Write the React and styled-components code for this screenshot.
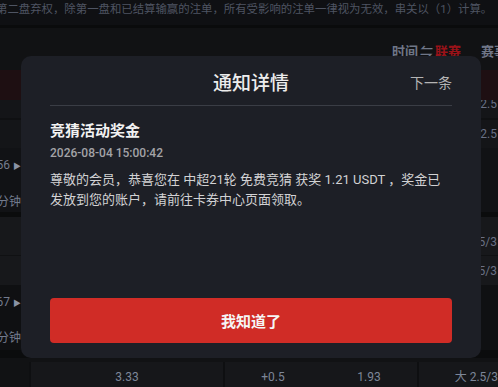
import React from 'react';
import styled, {createGlobalStyle} from 'styled-components';

const GlobalStyle = createGlobalStyle`
    html, body {
        margin: 0;
        padding: 0;
        background: #111214;
        overflow: hidden;
    }
    body {
        font-family: Roboto, "Noto Sans CJK SC", sans-serif;
    }
`;

const Page = styled.div`
    position: relative;
    width: 498px;
    height: 387px;
    overflow: hidden;
    background: #111214;
`;

const Notice = styled.div`
    height: 25px;
    background: #0f1013;
    color: #4e5462;
    font-size: 11.4px;
    line-height: 19px;
    white-space: nowrap;
    overflow: hidden;
    span {
        margin-left: -4px;
    }
`;

const Band = styled.div`
    height: ${p => p.h}px;
    background: ${p => p.bg || '#0a0b0c'};
`;

const Header = styled.div`
    height: 42px;
    display: flex;
    align-items: center;
    justify-content: flex-end;
    gap: 20px;
    padding-top: 2px;
    box-sizing: border-box;
    background: #111214;
    font-size: 13px;
    font-weight: 700;
    color: #6f7687;
    white-space: nowrap;
    overflow: hidden;
`;

const Sort = styled.div`
    display: flex;
    align-items: center;
    gap: 2px;
`;

const Hot = styled.span`
    color: #9a1219;
`;

const Filter = styled.div`
    margin-right: -35px;
`;

const LeagueRow = styled.div`
    height: 30px;
    background: #1e0f12;
`;

const Row = styled.div`
    height: ${p => p.h}px;
    display: flex;
    justify-content: space-between;
    background: ${p => p.bg || '#131417'};
    font-size: 12px;
    color: #687085;
    overflow: hidden;
`;

const Side = styled.div`
    width: 21px;
    display: flex;
    flex-direction: column;
    align-items: flex-end;
    gap: ${p => p.gap || 0}px;
    padding-top: ${p => p.pt || 0}px;
    line-height: 18px;
    white-space: nowrap;
    color: #737b8e;
`;

const Odds = styled.div`
    display: flex;
    align-items: center;
    line-height: ${p => p.lh || 18}px;
    padding-right: 1px;
    white-space: nowrap;
    margin-top: ${p => p.mt || 0}px;
    align-self: ${p => p.top ? 'flex-start' : 'center'};
`;

const Arrow = styled.span`
    font-size: 8px;
    margin-left: 3px;
    color: #8b93a5;
`;

const Bottom = styled.div`
    height: 25px;
    display: flex;
    gap: 2px;
    background: #0e0f11;
    font-size: 12px;
    color: #7d8698;
`;

const Cell = styled.div`
    width: ${p => p.w}px;
    flex: ${p => p.w ? 'none' : 1};
    background: ${p => p.blank ? '#111214' : '#16171a'};
    display: flex;
    align-items: flex-end;
    justify-content: ${p => p.end ? 'flex-end' : 'space-around'};
    padding-bottom: 3px;
    box-sizing: border-box;
    white-space: nowrap;
`;

const Modal = styled.div`
    position: absolute;
    left: 21px;
    top: 56px;
    width: 460px;
    height: 302px;
    box-sizing: border-box;
    background: #1d1f26;
    border-radius: 10px;
    padding: 0 29px 15px;
    display: flex;
    flex-direction: column;
`;

const ModalHead = styled.div`
    height: 49px;
    display: flex;
    align-items: center;
    justify-content: center;
    position: relative;
    border-bottom: 1px solid #3a3d45;
`;

const ModalTitle = styled.div`
    font-size: 19px;
    font-weight: 500;
    color: #ececec;
    padding-top: 1px;
`;

const Next = styled.div`
    position: absolute;
    right: 0;
    top: 16px;
    font-size: 14px;
    color: #b4b4b4;
`;

const MsgTitle = styled.div`
    margin-top: 14px;
    font-size: 15px;
    line-height: 22px;
    font-weight: 700;
    color: #f2f2f2;
`;

const MsgTime = styled.div`
    margin-top: 3px;
    font-size: 12px;
    line-height: 17px;
    font-weight: 500;
    color: #a3a3a6;
`;

const MsgBody = styled.div`
    margin-top: 8px;
    font-size: 13px;
    line-height: 20px;
    color: #d2d2d4;
`;

const OkButton = styled.button`
    margin-top: auto;
    height: 45px;
    width: 100%;
    border: none;
    border-radius: 4px;
    background: #d02c26;
    color: #f5f5f5;
    font-family: inherit;
    font-size: 15px;
    font-weight: 700;
    cursor: pointer;
`;

export default () => {
    return (
        <Page>
            <GlobalStyle/>
            <Notice>
                <span>第二盘弃权，除第一盘和已结算输赢的注单，所有受影响的注单一律视为无效，串关以（1）计算。</span>
            </Notice>
            <Band h={3}/>
            <Header>
                <Sort>时间 <span>⇋</span> <Hot>联赛</Hot></Sort>
                <Filter>赛事筛选</Filter>
            </Header>
            <LeagueRow/>
            <Row h={18} bg="#141518">
                <Side/>
                <Odds top lh={8}>大 2.5</Odds>
            </Row>
            <Band h={2} bg="#0f1012"/>
            <Row h={28} bg="#141518">
                <Side/>
                <Odds>大 2.5</Odds>
            </Row>
            <Row h={64} bg="#111215">
                <Side pt={8} gap={17}>
                    <div>1.56<Arrow>▶</Arrow></div>
                    <div>6分钟</div>
                </Side>
            </Row>
            <Band h={5} bg="#0b0c0d"/>
            <Row h={38} bg="#17181b">
                <Side/>
                <Odds top mt={16}>大 2.5/3</Odds>
            </Row>
            <Band h={1} bg="#101113"/>
            <Row h={29} bg="#17181b">
                <Side/>
                <Odds>大 2.5/3</Odds>
            </Row>
            <Row h={65} bg="#0f1012">
                <Side pt={8} gap={16}>
                    <div>1.67<Arrow>▶</Arrow></div>
                    <div>9分钟</div>
                </Side>
            </Row>
            <Band h={8} bg="#0b0c0d"/>
            <Band h={4} bg="#111214"/>
            <Bottom>
                <Cell blank w={29}/>
                <Cell w={192}>3.33</Cell>
                <Cell w={192}>
                    <span>+0.5</span>
                    <span>1.93</span>
                </Cell>
                <Cell end>大 2.5/3</Cell>
            </Bottom>

            <Modal>
                <ModalHead>
                    <ModalTitle>通知详情</ModalTitle>
                    <Next>下一条</Next>
                </ModalHead>
                <MsgTitle>竞猜活动奖金</MsgTitle>
                <MsgTime>2026-08-04 15:00:42</MsgTime>
                <MsgBody>
                    尊敬的会员，恭喜您在 中超21轮 免费竞猜 获奖 1.21 USDT ，奖金已发放到您的账户，请前往卡券中心页面领取。
                </MsgBody>
                <OkButton>我知道了</OkButton>
            </Modal>
        </Page>
    )
}
